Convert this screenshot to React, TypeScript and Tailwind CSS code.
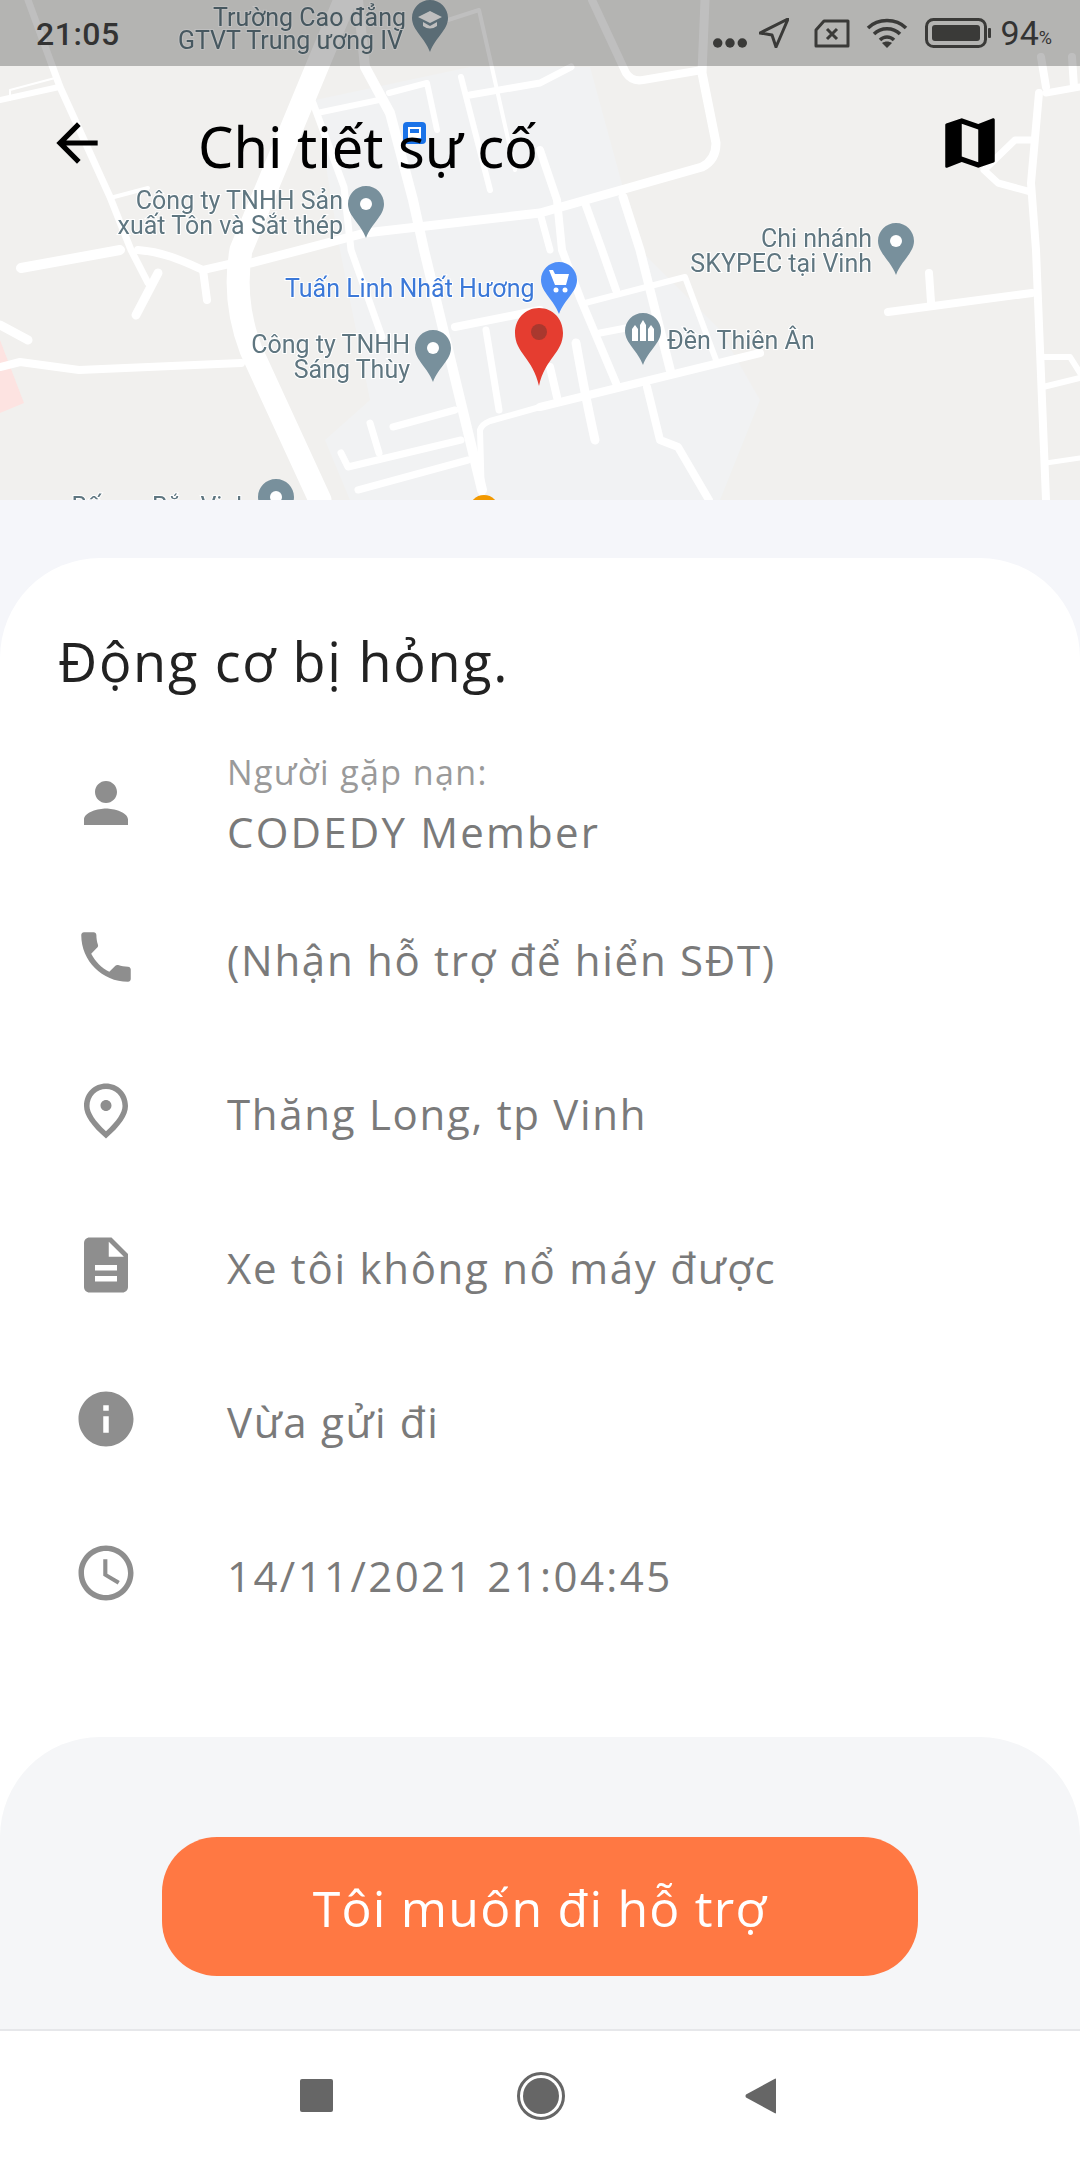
import type { ReactNode } from 'react'

const roads: [string, number][] = [
  ['M0 100 L59 87', 6],
  ['M10 100 L10 90 L55 78', 2],
  ['M28 0 L60 87 L110 197 L131 250 L148 283', 7],
  ['M158 273 L136 315', 9],
  ['M114 197 L148 188', 4],
  ['M21 268 L120 250', 10],
  ['M138 250 C165 252 185 262 203 270 L238 262', 8],
  ['M203 270 L207 300', 8],
  ['M251 263 L365 233 L540 213 L702 167 Q716 160 716 143 L702 73 L705 0', 9],
  ['M345 0 L317 67 L241 250 Q232 300 251 350 L320 500', 23],
  ['M358 0 L365 67 L390 113 L413 200 L424 250 L482 490', 10],
  ['M313 103 L344 187 L351 250 L382 337', 7],
  ['M317 113 L379 100', 6],
  ['M389 93 L427 83 L437 130', 6],
  ['M448 20 L479 10 L515 170', 4],
  ['M461 77 L490 190', 6],
  ['M470 95 L540 83 L571 67', 7],
  ['M540 150 L557 200 L562 250 L581 300 L616 383', 8],
  ['M585 203 L602 250 L616 290', 8],
  ['M623 197 L640 250 L671 373', 9],
  ['M540 213 L550 250', 7],
  ['M592 0 L626 73 Q632 82 643 80 L702 70', 8],
  ['M1041 57 L1046 87', 8],
  ['M1072 57 L1074 87', 8],
  ['M1046 93 L1080 87', 7],
  ['M1039 93 L1031 183 L1036 250 L1046 500', 8],
  ['M1031 140 L1015 140 L984 170 L998 183 L1031 192', 7],
  ['M1032 293 L888 312', 8],
  ['M929 273 L931 302', 8],
  ['M1043 357 L1070 357 L1080 373', 6],
  ['M1043 387 L1080 378', 6],
  ['M1046 463 L1080 458', 5],
  ['M540 407 L760 353', 8],
  ['M585 303 L685 277 L716 360', 6],
  ['M647 387 L660 440 L678 447 L709 500', 8],
  ['M576 343 Q586 400 595 440', 9],
  ['M550 367 L557 397', 8],
  ['M600 333 L626 328', 7],
  ['M455 327 L540 310', 8],
  ['M486 330 L499 410', 7],
  ['M482 500 L480 430 Q482 424 490 421 L540 407', 6],
  ['M393 427 L455 410', 7],
  ['M341 453 L348 467 L461 440', 7],
  ['M370 423 L379 453', 7],
  ['M358 490 L468 460', 7],
  ['M0 367 L20 362 L79 370 L241 363', 8],
  ['M0 325 L28 340', 9],
]

function Pin({ cx, top, fill = '#78909c', children }: { cx: number; top: number; fill?: string; children?: ReactNode }) {
  return (
    <g transform={`translate(${cx} ${top})`}>
      <path d="M0 0C10 0 18 8 18 18C18 30 5 38 0 52C-5 38 -18 30 -18 18C-18 8 -10 0 0 0Z" fill={fill} />
      {children ?? <circle cx="0" cy="18" r="6" fill="#fff" />}
    </g>
  )
}

function MapLabel({ x, y, end = true, fill = '#5f7680', children }: { x: number; y: number; end?: boolean; fill?: string; children: string }) {
  return (
    <text
      x={x}
      y={y}
      textAnchor={end ? 'end' : 'start'}
      fill={fill}
      stroke="#ffffff"
      strokeWidth="2"
      paintOrder="stroke"
      fontSize="25"
      fontFamily="Roboto, sans-serif"
    >
      {children}
    </text>
  )
}

function MapBackground() {
  return (
    <svg className="absolute inset-0 blur-[0.6px]" width="1080" height="500" viewBox="0 0 1080 500">
      <rect width="1080" height="500" fill="#f1f0ee" />
      <path d="M315 100L470 67L590 67L640 250L720 330L760 400L720 500L350 500L325 440L370 400L340 250Z" fill="#f1f2f3" />
      <path d="M0 340L24 403L0 413Z" fill="#fde3e1" />
      {roads.map(([d, w], i) => (
        <path key={i} d={d} fill="none" stroke="#ffffff" strokeWidth={w} strokeLinecap="round" strokeLinejoin="round" />
      ))}

      <MapLabel x={406} y={26}>Trường Cao đẳng</MapLabel>
      <MapLabel x={403} y={49}>GTVT Trung ương IV</MapLabel>
      <Pin cx={430} top={0}>
        <path d="M-12 17L0 11L12 17L0 23Z M-7 22L0 26L7 22L7 26Q0 31 -7 26Z" fill="#fff" />
      </Pin>

      <MapLabel x={343} y={209}>Công ty TNHH Sản</MapLabel>
      <MapLabel x={343} y={234}>xuất Tôn và Sắt thép</MapLabel>
      <Pin cx={366} top={186} />

      <MapLabel x={872} y={247}>Chi nhánh</MapLabel>
      <MapLabel x={872} y={272}>SKYPEC tại Vinh</MapLabel>
      <Pin cx={896} top={223} />

      <MapLabel x={285} y={297} end={false} fill="#3b78d8">Tuấn Linh Nhất Hương</MapLabel>
      <Pin cx={559} top={262} fill="#4e8ef7">
        <path d="M-10 8L-6 8L-4 12L10 12L7 23L-4 23Z" fill="#fff" />
        <circle cx="-3" cy="28" r="2.5" fill="#fff" />
        <circle cx="6" cy="28" r="2.5" fill="#fff" />
      </Pin>

      <MapLabel x={410} y={353}>Công ty TNHH</MapLabel>
      <MapLabel x={410} y={378}>Sáng Thùy</MapLabel>
      <Pin cx={433} top={330} />

      <Pin cx={643} top={313}>
        <path d="M-11 28L-11 16L-8 12L-5 16L-5 28Z M-3 28L-3 12L0 7L3 12L3 28Z M5 28L5 16L8 12L11 16L11 28Z" fill="#fff" />
      </Pin>
      <MapLabel x={667} y={349} end={false}>Đền Thiên Ân</MapLabel>

      <MapLabel x={250} y={515}>Bến xe Bắc Vinh</MapLabel>
      <Pin cx={276} top={479} />
      <circle cx="484" cy="510" r="15" fill="#f29900" />

      <rect x="403" y="122" width="23" height="22" rx="4" fill="#1a73e8" />
      <path d="M408 127H421V138H408Z" fill="#fff" />
      <path d="M410 129H419V133H410Z" fill="#1a73e8" />

      <path d="M539 308C553 308 563 319 563 333C563 353 545 358 539 386C533 358 515 353 515 333C515 319 525 308 539 308Z" fill="#e53d30" />
      <circle cx="539" cy="332" r="8" fill="#a9382e" />
    </svg>
  )
}

function StatusBar() {
  return (
    <div className="absolute inset-x-0 top-0 h-[66px] bg-black/25 flex items-center pl-[36px] text-[#333333] font-['Roboto',sans-serif]">
      <span className="text-[32px] font-medium tracking-[0.5px] mt-[2px]">21:05</span>
      <div className="ml-auto mr-[28px] flex items-center">
        <svg width="34" height="12" viewBox="0 0 36 12" className="mt-[20px]">
          <circle cx="5" cy="6" r="5" fill="#3a3a38" />
          <circle cx="18" cy="6" r="5" fill="#3a3a38" />
          <circle cx="31" cy="6" r="5" fill="#3a3a38" />
        </svg>
        <svg width="30" height="30" viewBox="0 0 30 30" className="ml-[12px]">
          <path d="M1 15L29 1L17 29L13 17Z" fill="none" stroke="#3a3a38" strokeWidth="3" strokeLinejoin="round" />
        </svg>
        <svg width="36" height="29" viewBox="0 0 36 29" className="ml-[25px]">
          <path d="M10 2H34V27H2V11Z" fill="none" stroke="#3a3a38" strokeWidth="3" strokeLinejoin="round" />
          <path d="M13 10L23 20M23 10L13 20" stroke="#3a3a38" strokeWidth="3" />
        </svg>
        <svg width="42" height="30" viewBox="0 0 42 30" className="ml-[16px]">
          <path d="M2 10C12 0 30 0 40 10M8 16C15 9 27 9 34 16M14 22C18 18 24 18 28 22" fill="none" stroke="#3a3a38" strokeWidth="3.5" />
          <path d="M21 30L16 25C19 23 23 23 26 25Z" fill="#3a3a38" />
        </svg>
        <svg width="66" height="30" viewBox="0 0 66 30" className="ml-[17px]">
          <rect x="1.5" y="1.5" width="59" height="27" rx="7" fill="none" stroke="#3a3a38" strokeWidth="3" />
          <rect x="7" y="7" width="48" height="16" rx="3" fill="#3a3a38" />
          <rect x="63" y="10" width="3" height="10" rx="1" fill="#3a3a38" />
        </svg>
        <span className="ml-[10px] text-[34px] leading-none">94</span>
        <span className="text-[18px] leading-none mt-[10px]">%</span>
      </div>
    </div>
  )
}

function Row({ icon, children, label, date }: { icon: string; children: string; label?: string; date?: boolean }) {
  return (
    <div className="h-[154px] flex items-center pl-[73px]">
      <svg width="66" height="66" viewBox="0 0 24 24" fill="#8e8e8e" className="shrink-0 mb-[6px]">
        <path d={icon} />
      </svg>
      <div className={`ml-[88px] ${label ? 'mb-[8px]' : ''}`}>
        {label && <div className="text-[34px] leading-[60px] tracking-[1.4px] text-[#9a9a9a]">{label}</div>}
        <div className={`text-[42px] leading-[60px] text-[#7a7a7a] ${date ? 'tracking-[2.4px]' : label ? 'tracking-[2.2px]' : 'tracking-[1.7px]'}`}>{children}</div>
      </div>
    </div>
  )
}

export default function App() {
  return (
    <div className="w-[1080px] h-[2160px] flex flex-col bg-[#f5f6fa] font-['Open_Sans','Noto_Sans',sans-serif]">
      <div className="relative h-[500px] shrink-0 overflow-hidden">
        <MapBackground />
        <StatusBar />
        <div className="absolute inset-x-0 top-[66px] h-[154px] flex items-center pl-[46px] pr-[77px] font-['Noto_Sans',sans-serif]">
          <svg width="62" height="62" viewBox="0 0 24 24" fill="#000000">
            <path d="M20 11H7.83l5.59-5.59L12 4l-8 8 8 8 1.41-1.41L7.83 13H20v-2z" />
          </svg>
          <h1 className="ml-[90px] mt-[6px] text-[56px] leading-none font-normal text-black">Chi tiết sự cố</h1>
          <svg width="66" height="66" viewBox="0 0 24 24" fill="#000000" className="ml-auto">
            <path d="M20.5 3l-.16.03L15 5.1 9 3 3.36 4.9c-.21.07-.36.25-.36.48V20.5c0 .28.22.5.5.5l.16-.03L9 18.9l6 2.1 5.64-1.9c.21-.07.36-.25.36-.48V3.5c0-.28-.22-.5-.5-.5zM15 19l-6-2.11V5l6 2.11V19z" />
          </svg>
        </div>
      </div>

      <div className="mt-[58px] flex-1 flex flex-col bg-white rounded-t-[100px] overflow-hidden">
        <h2 className="pl-[58px] pt-[73px] text-[54px] leading-[60px] tracking-[1.7px] font-normal text-[#222222]">Động cơ bị hỏng.</h2>
        <div className="mt-[38px]">
          <Row label="Người gặp nạn:" icon="M12 12c2.21 0 4-1.79 4-4s-1.79-4-4-4-4 1.79-4 4 1.79 4 4 4zm0 2c-2.67 0-8 1.34-8 4v2h16v-2c0-2.66-5.33-4-8-4z">CODEDY Member</Row>
          <Row icon="M6.62 10.79c1.44 2.83 3.76 5.14 6.59 6.59l2.2-2.2c.27-.27.67-.36 1.02-.24 1.12.37 2.33.57 3.57.57.55 0 1 .45 1 1V20c0 .55-.45 1-1 1-9.39 0-17-7.61-17-17 0-.55.45-1 1-1h3.5c.55 0 1 .45 1 1 0 1.25.2 2.45.57 3.57.11.35.03.74-.25 1.02l-2.2 2.2z">(Nhận hỗ trợ để hiển SĐT)</Row>
          <Row icon="M12 12c-1.1 0-2-.9-2-2s.9-2 2-2 2 .9 2 2-.9 2-2 2zm6-1.8C18 6.57 15.35 4 12 4s-6 2.57-6 6.2c0 2.34 1.95 5.44 6 9.14 4.05-3.7 6-6.8 6-9.14zM12 2c4.2 0 8 3.22 8 8.2 0 3.32-2.67 7.25-8 11.8-5.33-4.55-8-8.48-8-11.8C4 5.22 7.8 2 12 2z">Thăng Long, tp Vinh</Row>
          <Row icon="M14 2H6c-1.1 0-1.99.9-1.99 2L4 20c0 1.1.89 2 1.99 2H18c1.1 0 2-.9 2-2V8l-6-6zm2 16H8v-2h8v2zm0-4H8v-2h8v2zm-3-5V3.5L18.5 9H13z">Xe tôi không nổ máy được</Row>
          <Row icon="M12 2C6.48 2 2 6.48 2 12s4.48 10 10 10 10-4.48 10-10S17.52 2 12 2zm1 15h-2v-6h2v6zm0-8h-2V7h2v2z">Vừa gửi đi</Row>
          <Row date icon="M11.99 2C6.47 2 2 6.48 2 12s4.47 10 9.99 10C17.52 22 22 17.52 22 12S17.52 2 11.99 2zM12 20c-4.42 0-8-3.58-8-8s3.58-8 8-8 8 3.58 8 8-3.58 8-8 8zm.5-13H11v6l5.25 3.15.75-1.23-4.5-2.67z">14/11/2021 21:04:45</Row>
        </div>
        <div className="mt-auto h-[292px] bg-[#f5f6f8] rounded-t-[100px] pt-[100px] flex justify-center">
          <button className="w-[756px] h-[139px] rounded-[55px] bg-[#ff7843] text-white text-[50px] tracking-[1.2px] pt-[3px]">Tôi muốn đi hỗ trợ</button>
        </div>
      </div>

      <div className="h-[131px] shrink-0 bg-white border-t-2 border-[#e6e7ea] flex items-center justify-center">
        <div className="flex items-center gap-[184px]">
          <div className="w-[33px] h-[33px] rounded-[2px] bg-[#666666]" />
          <div className="w-[48px] h-[48px] rounded-full border-[3px] border-[#666666] p-[3px]">
            <div className="w-full h-full rounded-full bg-[#666666]" />
          </div>
          <svg width="32" height="36" viewBox="0 0 32 36" fill="#666666" className="-ml-[4px] mr-[4px]">
            <path d="M31 1.5V34.5Q31 36 29.5 35L1 19.5Q0 18 1 16.5L29.5 1Q31 0 31 1.5Z" />
          </svg>
        </div>
      </div>
    </div>
  )
}
